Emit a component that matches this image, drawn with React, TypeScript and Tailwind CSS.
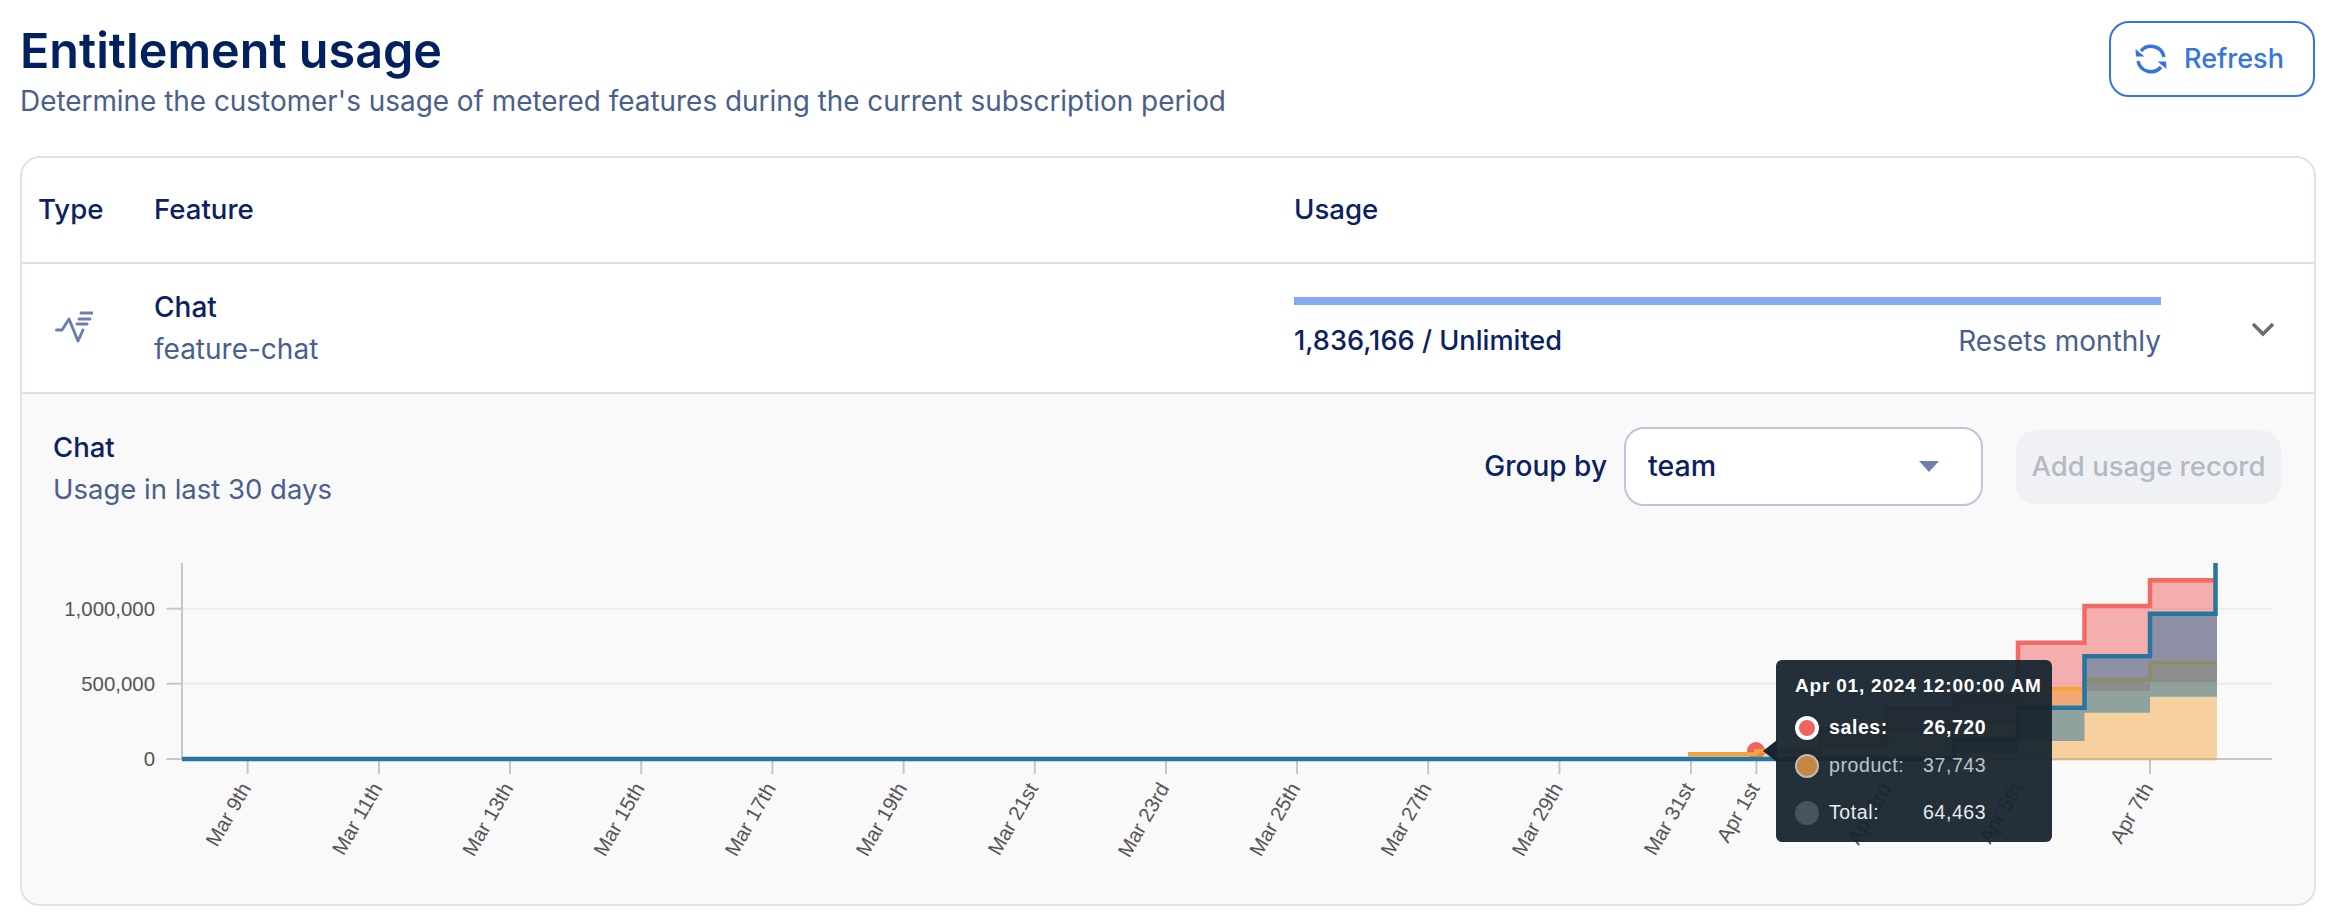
import React from "react";

const font = "font-['Inter','Noto_Sans',sans-serif]";
const chartFont = "'Liberation Sans', Arial, sans-serif";

const ticks: [number, string][] = [
  [247.6, "Mar 9th"],
  [378.9, "Mar 11th"],
  [510, "Mar 13th"],
  [641.2, "Mar 15th"],
  [772.4, "Mar 17th"],
  [903.6, "Mar 19th"],
  [1034.8, "Mar 21st"],
  [1166, "Mar 23rd"],
  [1297, "Mar 25th"],
  [1428.2, "Mar 27th"],
  [1559.4, "Mar 29th"],
  [1691, "Mar 31st"],
  [1756.4, "Apr 1st"],
  [1888, "Apr 3rd"],
  [2019, "Apr 5th"],
  [2150, "Apr 7th"],
];

type Step = [number, number];

// step line: each point holds its y until the next x
const stepLine = (pts: Step[], end: number) => {
  let d = `M${pts[0][0]} ${pts[0][1]}`;
  pts.forEach(([x, y], i) => {
    if (i > 0) d += `H${x}V${y}`;
  });
  return d + `H${end}`;
};

const stepBand = (top: Step[], bottom: Step[], end: number) => {
  const back = [...bottom].reverse();
  let d = stepLine(top, end);
  d += `V${back[0][1]}`;
  back.forEach(([x, y], i) => {
    d += `H${x}`;
    if (i < back.length - 1) d += `V${back[i + 1][1]}`;
  });
  return d + "Z";
};

const END = 2214;

const orangeTop: Step[] = [[1688, 753], [1756, 750], [1820, 744], [1887, 730], [1954, 722], [2018, 687.7], [2084.5, 678.3], [2150, 661.7]];
const orangeBase: Step[] = [[1688, 759.5], [END, 759.5]];
const blueTop: Step[] = [[1954, 738], [2018, 706.7], [2084.5, 655.3], [2150, 612.7]];
const blueBase: Step[] = [[1954, 752], [2018, 740], [2084.5, 711.7], [2150, 695.7]];
const redTop: Step[] = [[1756, 750], [1820, 728], [1887, 708], [1954, 695], [2018, 641.7], [2084.5, 605], [2150, 579.3]];
const redBase: Step[] = [[1756, 753], [1820, 744], [1887, 730], [1954, 722], [2018, 706.7], [2084.5, 690], [2150, 681]];

function UsageChart() {
  return (
    <svg viewBox="22 540 2292 363" className="w-[2292px] h-[363px] block" style={{ fontFamily: chartFont }}>
      {[607.7, 682.7].map((y) => (
        <line key={y} x1="182" x2="2272" y1={y} y2={y} stroke="#ececec" strokeWidth="2" />
      ))}
      <path d="M182 562V758H2272" fill="none" stroke="#c6c6c6" strokeWidth="2" />
      {[607.7, 682.7, 758].map((y) => (
        <line key={y} x1="166.5" x2="182" y1={y} y2={y} stroke="#c6c6c6" strokeWidth="2" />
      ))}
      {[["1,000,000", 607.7], ["500,000", 682.7], ["0", 758]].map(([label, y]) => (
        <text key={label} x="155" y={Number(y) + 7} textAnchor="end" fontSize="20.4" fill="#555">
          {label}
        </text>
      ))}
      {ticks.map(([x, label]) => (
        <g key={label}>
          <line x1={x} x2={x} y1="758" y2="773" stroke="#c6c6c6" strokeWidth="2" />
          <text
            transform={`translate(${x + 4} 787) rotate(-60)`}
            textAnchor="end"
            fontSize="20.4"
            fill="#555"
          >
            {label}
          </text>
        </g>
      ))}

      <circle cx="1756" cy="750" r="9" fill="#ef6461" />
      <path d={stepBand(redTop, redBase, END + 3)} fill="#ef6461" fillOpacity="0.5" />
      <path d={stepLine(redTop, END)} fill="none" stroke="#f26a64" strokeWidth="4.5" />
      <path d={stepBand(orangeTop, orangeBase, END + 3)} fill="#f2a33a" fillOpacity="0.48" />
      <path d={stepLine(orangeTop, END + 3)} fill="none" stroke="#f2a33a" strokeWidth="4" />
      <path d={stepBand(blueTop, blueBase, END + 3)} fill="#28749d" fillOpacity="0.5" />
      <path
        d="M182 758H1954V738H2018V706.7H2084.5V655.3H2150V612.7H2215.5V562"
        fill="none"
        stroke="#26769f"
        strokeWidth="4.5"
      />
    </svg>
  );
}

function SwingIcon() {
  return (
    <svg className="mb-[2px]" width="38" height="32" viewBox="0 0 38 32" fill="none" stroke="#6c7fae" strokeWidth="3" strokeLinecap="round" strokeLinejoin="round">
      <path d="M1.5 19H7L14 8L23 30L28 19" />
      <path d="M26 2H37M24 8H35M22 13H32" />
    </svg>
  );
}

function RefreshIcon() {
  return (
    <svg width="32" height="30" viewBox="0 0 32 30" fill="none">
      <path d="M29 13A13.2 13.2 0 0 0 6 7" stroke="#3575e0" strokeWidth="3.5" />
      <path d="M0.5 5L9.5 12.5H1Z" fill="#3575e0" />
      <path d="M3 17A13.2 13.2 0 0 0 26 23" stroke="#3575e0" strokeWidth="3.5" />
      <path d="M31.5 25L22.5 17.5H31Z" fill="#3575e0" />
    </svg>
  );
}

function ChartTooltip() {
  return (
    <div
      className="absolute left-[1754px] top-[266px] w-[276px] h-[182px] rounded-[6px] bg-[#17252f]/95 text-white pl-[19px] pt-[12px] font-normal"
      style={{ fontFamily: chartFont }}
    >
      <div className="absolute left-[-13px] top-[80px] w-0 h-0 border-y-[11px] border-y-transparent border-r-[14px] border-r-[#17252f]" />
      <div className="text-[19px] leading-[28px] font-bold tracking-[0.8px] whitespace-nowrap">Apr 01, 2024 12:00:00 AM</div>
      <div className="flex flex-col mt-[9px] text-[19.5px] tracking-[0.6px]">
        <div className="flex items-center h-[38px] font-bold">
          <span className="w-[24px] h-[24px] rounded-full bg-[#ef6461] border-[4px] border-white shrink-0" />
          <span className="ml-[10px] w-[94px]">sales:</span>
          <span>26,720</span>
        </div>
        <div className="flex items-center h-[38px]">
          <span className="w-[24px] h-[24px] rounded-full bg-[#c5873f] border-[2px] border-[#bbbbbb] shrink-0" />
          <span className="ml-[10px] w-[94px] opacity-70">product:</span>
          <span className="opacity-70">37,743</span>
        </div>
        <div className="flex items-center h-[46px] mt-[5px] opacity-90">
          <span className="w-[24px] h-[24px] rounded-full bg-[#4b5861] shrink-0" />
          <span className="ml-[10px] w-[94px]">Total:</span>
          <span>64,463</span>
        </div>
      </div>
    </div>
  );
}

export default function App() {
  return (
    <div className={`${font} w-[2332px] h-[916px] bg-white overflow-hidden text-[#0b2161] font-[450]`}>
      <div className="flex justify-between pl-[20px] pr-[17px] pt-[21px]">
        <div>
          <h1 className="mt-[1px] text-[48.5px] leading-[58px] font-semibold text-[#00205f]">Entitlement usage</h1>
          <p className="text-[27.9px] font-normal leading-[36px] text-[#4a5f8c] mt-[3px]">
            Determine the customer's usage of metered features during the current subscription period
          </p>
        </div>
        <button className="w-[206px] h-[76px] flex items-center justify-center gap-[17px] pr-[5px] rounded-[20px] border-2 border-[#3575e0] text-[#3575e0] text-[27px]">
          <RefreshIcon />
          Refresh
        </button>
      </div>

      <div className="mt-[37px] ml-[20px] mr-[16px] h-[750px] rounded-[20px] border-2 border-[#dfe2ee] overflow-hidden">
        <div className="flex items-center h-[106px] border-b-2 border-[#e0e0e0] text-[27.6px]">
          <div className="w-[132px] pl-[16px]">Type</div>
          <div className="w-[1140px]">Feature</div>
          <div>Usage</div>
        </div>

        <div className="flex items-center h-[130px] border-b-2 border-[#e0e0e0]">
          <div className="w-[132px] pl-[33px]">
            <SwingIcon />
          </div>
          <div className="w-[1140px] text-[28px]">
            <div className="leading-[42px]">Chat</div>
            <div className="leading-[42px] font-normal text-[#4a5f8c]">feature-chat</div>
          </div>
          <div className="w-[867px]">
            <div className="h-[8px] bg-[#84aaee]" />
            <div className="flex justify-between items-center text-[28px] mt-[18px] leading-[36px]">
              <span className="text-[27.2px]">1,836,166 / Unlimited</span>
              <span className="font-normal text-[#4a5f8c]">Resets monthly</span>
            </div>
          </div>
          <svg className="ml-[90px] mt-[2px]" width="24" height="16" viewBox="0 0 24 16" fill="none" stroke="#6b6b6b" strokeWidth="3.5">
            <path d="M2 3L12 13L22 3" />
          </svg>
        </div>

        <div className="relative h-[510px] bg-[#f9f9f9]">
          <div className="flex justify-between pl-[31px] pr-[33px] pt-[32px] h-[147px]">
            <div className="text-[27.5px] leading-[42px]">
              <div>Chat</div>
              <div className="font-normal text-[#4a5f8c]">Usage in last 30 days</div>
            </div>
            <div className="flex items-start mt-[1px] text-[28px]">
              <span className="text-[28px] leading-[78px]">Group by</span>
              <div className="ml-[17px] w-[359px] h-[79px] flex items-center justify-between px-[22px] bg-white border-2 border-[#bfc4d8] rounded-[20px] text-[28.6px]">
                team
                <span className="mr-[20px] w-0 h-0 border-x-[10px] border-x-transparent border-t-[11px] border-t-[#6c7fae]" />
              </div>
              <div className="ml-[33px] mt-[3px] w-[265px] h-[74px] flex items-center justify-center rounded-[20px] bg-[#f0f1f5] text-[27.5px] text-[#b5b9c4]">
                Add usage record
              </div>
            </div>
          </div>
          <UsageChart />
          <ChartTooltip />
        </div>
      </div>
    </div>
  );
}
